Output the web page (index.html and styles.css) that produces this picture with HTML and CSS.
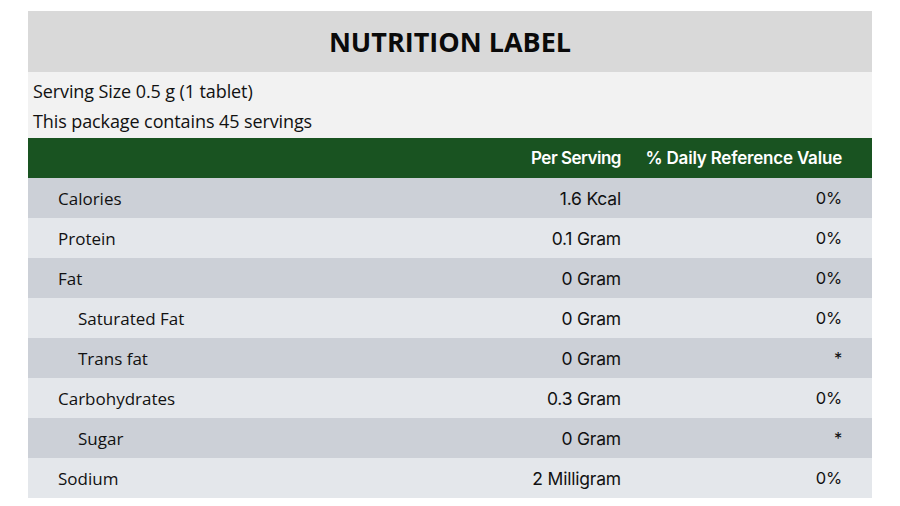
FILE: index.html
```html
<!DOCTYPE html>
<html>
<head>
<meta charset="utf-8">
<link rel="stylesheet" href="styles.css">
</head>
<body>
<div class="label">
  <div class="title">NUTRITION LABEL</div>
  <div class="info">
    <div class="info-line">Serving Size 0.5 g (1 tablet)</div>
    <div class="info-line">This package contains 45 servings</div>
  </div>
  <div class="row head">
    <div class="name"></div>
    <div class="val">Per Serving</div>
    <div class="pct">% Daily Reference Value</div>
  </div>
  <div class="row dark"><div class="name">Calories</div><div class="val">1.6 Kcal</div><div class="pct">0%</div></div>
  <div class="row light"><div class="name">Protein</div><div class="val">0.1 Gram</div><div class="pct">0%</div></div>
  <div class="row dark"><div class="name">Fat</div><div class="val">0 Gram</div><div class="pct">0%</div></div>
  <div class="row light"><div class="name sub">Saturated Fat</div><div class="val">0 Gram</div><div class="pct">0%</div></div>
  <div class="row dark"><div class="name sub">Trans fat</div><div class="val">0 Gram</div><div class="pct">*</div></div>
  <div class="row light"><div class="name">Carbohydrates</div><div class="val">0.3 Gram</div><div class="pct">0%</div></div>
  <div class="row dark"><div class="name sub">Sugar</div><div class="val">0 Gram</div><div class="pct">*</div></div>
  <div class="row light"><div class="name">Sodium</div><div class="val">2 Milligram</div><div class="pct">0%</div></div>
</div>
</body>
</html>
```
FILE: styles.css
```css
html, body {
  margin: 0;
  padding: 0;
  background: #ffffff;
}
body {
  padding: 11px 28px 0 28px;
}
.label {
  width: 844px;
  font-family: "Open Sans", "Noto Sans", sans-serif;
  color: #111;
}
.title {
  height: 61px;
  background: #d9d9d9;
  display: flex;
  align-items: center;
  justify-content: center;
  font-weight: 700;
  font-size: 27px;
  color: #0a0a0a;
  padding-bottom: 1px;
  box-sizing: border-box;
}
.info {
  background: #f2f2f2;
  height: 66px;
  padding: 5px 0 0 5px;
  box-sizing: border-box;
}
.info-line {
  font-size: 18px;
  height: 30px;
  line-height: 28px;
  letter-spacing: -0.1px;
}
.row {
  display: flex;
  align-items: center;
  height: 40px;
  font-size: 17px;
}
.head {
  background: #195321;
  color: #fff;
  font-family: "Inter", "Roboto", sans-serif;
  font-weight: 600;
  letter-spacing: -0.2px;
}
.head .val {
  letter-spacing: -0.5px;
}
.dark { background: #ccd0d7; }
.light { background: #e4e7eb; }
.name {
  flex: 1;
  padding-left: 30px;
}
.name.sub { padding-left: 50px; }
.val {
  width: 170px;
  text-align: right;
  font-family: "Inter", "Roboto", sans-serif;
}
.pct {
  width: 221px;
  padding-right: 30px;
  text-align: right;
  font-family: "Inter", "Roboto", sans-serif;
}
.row:not(.head) .val {
  font-size: 17.5px;
  letter-spacing: -0.2px;
}
.row:not(.head) .pct {
  font-size: 16.5px;
  letter-spacing: -0.2px;
}
```
